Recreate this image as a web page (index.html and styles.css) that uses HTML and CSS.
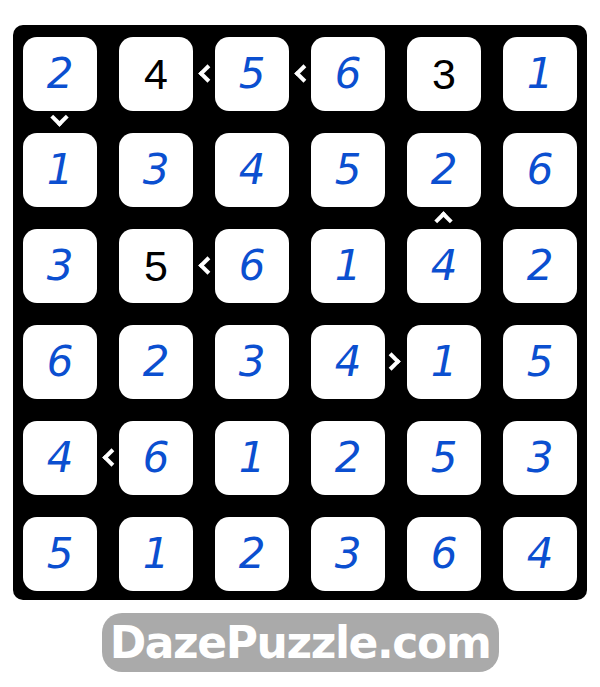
FILE: index.html
```html
<!DOCTYPE html>
<html lang="en">
<head>
  <meta charset="UTF-8">
  <title>Futoshiki 6x6 - Solution</title>
  <link rel="stylesheet" href="styles.css">
</head>
<body>
<div class="page">
  <div class="board">
    <!-- row 1 -->
    <div class="cell guess down">2</div>
    <div class="cell given lt">4</div>
    <div class="cell guess lt">5</div>
    <div class="cell guess">6</div>
    <div class="cell given">3</div>
    <div class="cell guess">1</div>
    <!-- row 2 -->
    <div class="cell guess">1</div>
    <div class="cell guess">3</div>
    <div class="cell guess">4</div>
    <div class="cell guess">5</div>
    <div class="cell guess">2</div>
    <div class="cell guess">6</div>
    <!-- row 3 -->
    <div class="cell guess">3</div>
    <div class="cell given lt">5</div>
    <div class="cell guess">6</div>
    <div class="cell guess">1</div>
    <div class="cell guess up">4</div>
    <div class="cell guess">2</div>
    <!-- row 4 -->
    <div class="cell guess">6</div>
    <div class="cell guess">2</div>
    <div class="cell guess">3</div>
    <div class="cell guess gt">4</div>
    <div class="cell guess">1</div>
    <div class="cell guess">5</div>
    <!-- row 5 -->
    <div class="cell guess lt">4</div>
    <div class="cell guess">6</div>
    <div class="cell guess">1</div>
    <div class="cell guess">2</div>
    <div class="cell guess">5</div>
    <div class="cell guess">3</div>
    <!-- row 6 -->
    <div class="cell guess">5</div>
    <div class="cell guess">1</div>
    <div class="cell guess">2</div>
    <div class="cell guess">3</div>
    <div class="cell guess">6</div>
    <div class="cell guess">4</div>
  </div>

  <div class="brand">DazePuzzle.com</div>
</div>
</body>
</html>
```

FILE: styles.css
```css
body {
  margin: 0;
  background: #fff;
  font-family: "Liberation Sans", Arial, sans-serif;
}

.page {
  width: 600px;
  padding-top: 25px;
  display: flex;
  flex-direction: column;
  align-items: center;
}

.board {
  width: 554px;
  padding: 12px 10px 9px 10px;
  background: #000;
  border-radius: 10px;
  display: grid;
  grid-template-columns: repeat(6, 74px);
  grid-auto-rows: 74px;
  gap: 22px;
}

.cell {
  position: relative;
  background: #fff;
  border-radius: 14px;
  display: flex;
  align-items: center;
  justify-content: center;
  font-size: 43px;
  line-height: 1;
}

.given {
  color: #000;
}

.guess {
  color: #0b4fd0;
  font-style: italic;
  font-family: "DejaVu Sans", sans-serif;
  font-size: 42px;
}

/* inequality signs sit in the black gap next to a cell */
.lt::after,
.gt::after,
.down::after,
.up::after {
  content: "";
  position: absolute;
  box-sizing: border-box;
  width: 13px;
  height: 13px;
  border-style: solid;
  border-color: #fff;
  border-width: 0;
  transform: rotate(45deg);
}

.lt::after {
  right: -21px;
  top: 30px;
  border-left-width: 4px;
  border-bottom-width: 4px;
}

.gt::after {
  right: -13px;
  top: 30px;
  border-right-width: 4px;
  border-top-width: 4px;
}

.down::after {
  left: 30px;
  bottom: -13px;
  border-right-width: 4px;
  border-bottom-width: 4px;
}

.up::after {
  left: 30px;
  top: -15px;
  border-left-width: 4px;
  border-top-width: 4px;
}

.brand {
  margin-top: 13px;
  width: 397px;
  height: 59px;
  background: #aaa;
  border-radius: 20px;
  color: #fff;
  font-family: "DejaVu Sans", Verdana, sans-serif;
  font-weight: bold;
  font-size: 44px;
  letter-spacing: -1.4px;
  display: flex;
  align-items: center;
  justify-content: center;
}
```
